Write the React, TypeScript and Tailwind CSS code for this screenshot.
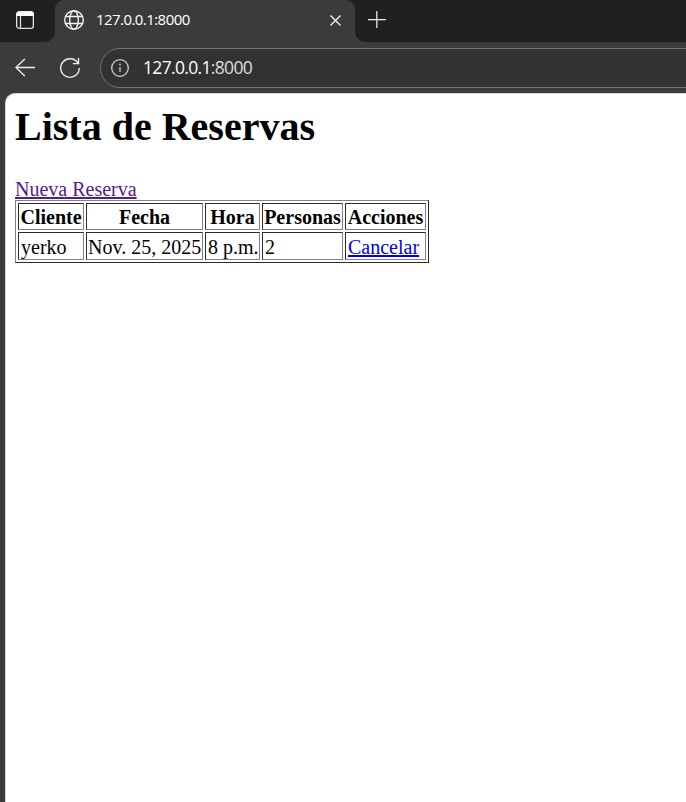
import React from "react";

const columns = [
  { label: "Cliente", width: "w-[66px]" },
  { label: "Fecha", width: "w-[117px]" },
  { label: "Hora", width: "w-[55px]" },
  { label: "Personas", width: "w-[81px]" },
  { label: "Acciones", width: "w-[81px]" },
];

const cell =
  "overflow-visible whitespace-nowrap border border-t-[#2c2c2c] border-l-[#2c2c2c] border-r-[#808080] border-b-[#808080] pt-[2px] pb-0 leading-[23px]";

function TabStrip() {
  return (
    <div className="flex h-[42px] bg-[#3b3b3b]">
      <div className="flex w-[55px] shrink-0 rounded-br-[10px] bg-[#202020]">
        <svg className="ml-4 mt-[11px] h-[18px] w-[18px]" viewBox="0 0 18 18" fill="none">
          <rect x="0.65" y="0.65" width="16.7" height="16.7" rx="2.6" stroke="#e0e0e0" strokeWidth="1.3" />
          <path d="M0.5 5V3.2Q0.5 0.5 3.2 0.5h11.6Q17.5 0.5 17.5 3.2V5Z" fill="#fff" />
          <path d="M4.5 5v12" stroke="#e8e8e8" strokeWidth="1.2" />
        </svg>
      </div>
      <div className="h-full w-[300px] shrink-0 bg-[#202020]">
        <div className="flex h-full items-start rounded-t-[9px] bg-[#3b3b3b]">
          <svg className="ml-[9px] mt-[10px] h-5 w-5 shrink-0" viewBox="0 0 20 20" fill="none" stroke="#f2f2f2" strokeWidth="1.4">
            <circle cx="10" cy="10" r="9.3" />
            <ellipse cx="10" cy="10" rx="4.3" ry="9.3" />
            <path d="M1.4 6.5h17.2M1.4 13.5h17.2" />
          </svg>
          <span className="ml-[12px] mt-[8px] w-[234px] whitespace-nowrap font-['Open_Sans',sans-serif] text-[15px] leading-[22px] tracking-[-0.56px] text-white">
            127.0.0.1:8000
          </span>
          <svg className="mt-[15px] h-[11px] w-[11px] shrink-0" viewBox="0 0 11 11" stroke="#f5f5f5" strokeWidth="1.35">
            <path d="M0.5 0.5 10.5 10.5M10.5 0.5 0.5 10.5" />
          </svg>
        </div>
      </div>
      <div className="flex-1 rounded-bl-[10px] bg-[#202020]">
        <svg className="ml-[13px] mt-[11px] h-[18px] w-[18px]" viewBox="0 0 18 18" stroke="#ededed" strokeWidth="1.25">
          <path d="M0 8.5h18M8.8 0v17" />
        </svg>
      </div>
    </div>
  );
}

function Toolbar() {
  return (
    <div className="flex h-[51px] items-start overflow-hidden bg-[#3b3b3b]">
      <svg className="ml-[15px] mt-[16px] h-[19px] w-5 shrink-0" viewBox="0 0 20 19" fill="none" stroke="#ededed" strokeWidth="1.4">
        <path d="M9.8 1 .9 9.5l8.9 8.5M.9 9.5H20" />
      </svg>
      <svg className="ml-[25px] mt-[15px] h-[22px] w-5 shrink-0" viewBox="0 0 20 22" fill="none" stroke="#ededed" strokeWidth="1.4">
        <path d="M18.3 6.8A9.3 9.3 0 1 0 19.3 11" />
        <path d="M18.5 1v5.6H12.8" />
      </svg>
      <div className="ml-5 mt-[6px] flex h-10 w-[620px] shrink-0 items-center rounded-l-full border border-[#737373] bg-[#323232]">
        <svg className="ml-[10px] h-[18px] w-[18px]" viewBox="0 0 18 18" fill="none" stroke="#d0d0d0" strokeWidth="1.3">
          <circle cx="9" cy="9" r="8.3" />
          <path d="M9 8v5" />
          <circle cx="9" cy="5.4" r="0.9" fill="#d0d0d0" stroke="none" />
        </svg>
        <span className="mb-[2px] ml-[14px] whitespace-nowrap font-['Open_Sans',sans-serif] text-[17.5px] leading-6 tracking-[-0.67px] text-white">
          127.0.0.1<span className="text-[#dedede]">:8000</span>
        </span>
      </div>
    </div>
  );
}

export default function App() {
  return (
    <div className="flex h-[802px] w-[686px] flex-col overflow-hidden bg-[#3b3b3b]">
      <TabStrip />
      <Toolbar />
      <main className="ml-[5px] flex-1 rounded-tl-[10px] border-l border-t border-[#d8d8d8] bg-white pl-[9px] font-['Liberation_Serif',serif] text-[20px] text-black">
        <h1 className="mt-[10px] h-[46px] text-[40px] font-bold leading-[46px]">Lista de Reservas</h1>
        <div className="mt-[27px] h-[23px] leading-[25px]">
          <a href="#" className="text-[#551a8b] underline decoration-2">Nueva Reserva</a>
        </div>
        <table className="h-[63px] w-[414px] table-fixed border-separate border-spacing-[2px] border border-t-[#808080] border-l-[#808080] border-r-[#2c2c2c] border-b-[#2c2c2c]">
          <thead>
            <tr className="h-[27px]">
              {columns.map((c) => (
                <th key={c.label} className={`${cell} ${c.width} px-[1px] text-center font-bold`}>{c.label}</th>
              ))}
            </tr>
          </thead>
          <tbody>
            <tr className="h-[28px]">
              <td className={`${cell} pl-[2px]`}>yerko</td>
              <td className={`${cell} pl-[1px]`}>Nov. 25, 2025</td>
              <td className={`${cell} pl-[2px]`}>8 p.m.</td>
              <td className={`${cell} pl-[2px]`}>2</td>
              <td className={`${cell} pl-[2px]`}>
                <a href="#" className="text-[#0000ee] underline decoration-2">Cancelar</a>
              </td>
            </tr>
          </tbody>
        </table>
      </main>
    </div>
  );
}
